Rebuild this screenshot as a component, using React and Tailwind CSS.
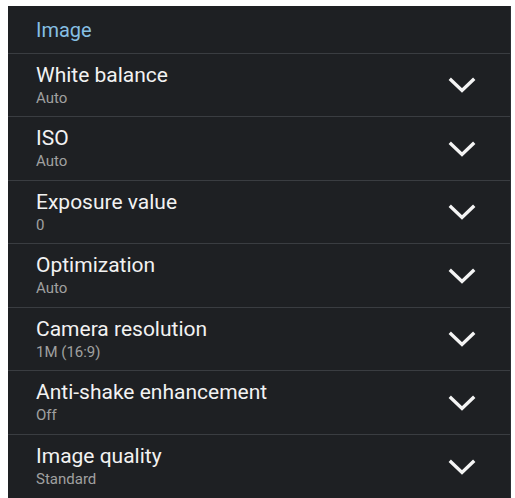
const rows = [
  { title: 'White balance', value: 'Auto', h: 'h-[63px]' },
  { title: 'ISO', value: 'Auto', h: 'h-[64px]' },
  { title: 'Exposure value', value: '0', h: 'h-[63px]' },
  { title: 'Optimization', value: 'Auto', h: 'h-[64px]' },
  { title: 'Camera resolution', value: '1M (16:9)', h: 'h-[63px]' },
  { title: 'Anti-shake enhancement', value: 'Off', h: 'h-[64px]' },
  { title: 'Image quality', value: 'Standard', h: 'h-[64px]' },
];

function Chevron() {
  return (
    <svg width="28" height="18" viewBox="0 0 28 18" fill="none" className="shrink-0">
      <path d="M3 4 L14 14.5 L25 4" stroke="#f4f4f4" strokeWidth="3.4" strokeLinecap="square" strokeLinejoin="miter" />
    </svg>
  );
}

export default function App() {
  return (
    <div className="min-h-screen bg-white pt-[6px] pl-[8px]" style={{ fontFamily: 'Roboto, "Noto Sans", sans-serif' }}>
      <div className="w-[503px] bg-[#1e2023] border-r border-[#2c2f33] overflow-hidden">
        {/* section header */}
        <div className="h-[47px] flex items-center pl-[28px]">
          <span className="text-[20px] leading-[24px] text-[#86bfe3]">Image</span>
        </div>

        {rows.map((row) => (
          <div key={row.title} className={`${row.h} border-t border-[#3a3d41] flex items-start justify-between pl-[28px] pr-[34px]`}>
            <div className="flex flex-col pt-[9px]">
              <span className="text-[21px] leading-[24px] text-[#f2f2f2]">{row.title}</span>
              <span className="text-[15px] leading-[18px] mt-[2px] text-[#a0a0a0]">{row.value}</span>
            </div>
            <div className="h-full flex items-center">
              <Chevron />
            </div>
          </div>
        ))}
      </div>
    </div>
  );
}
